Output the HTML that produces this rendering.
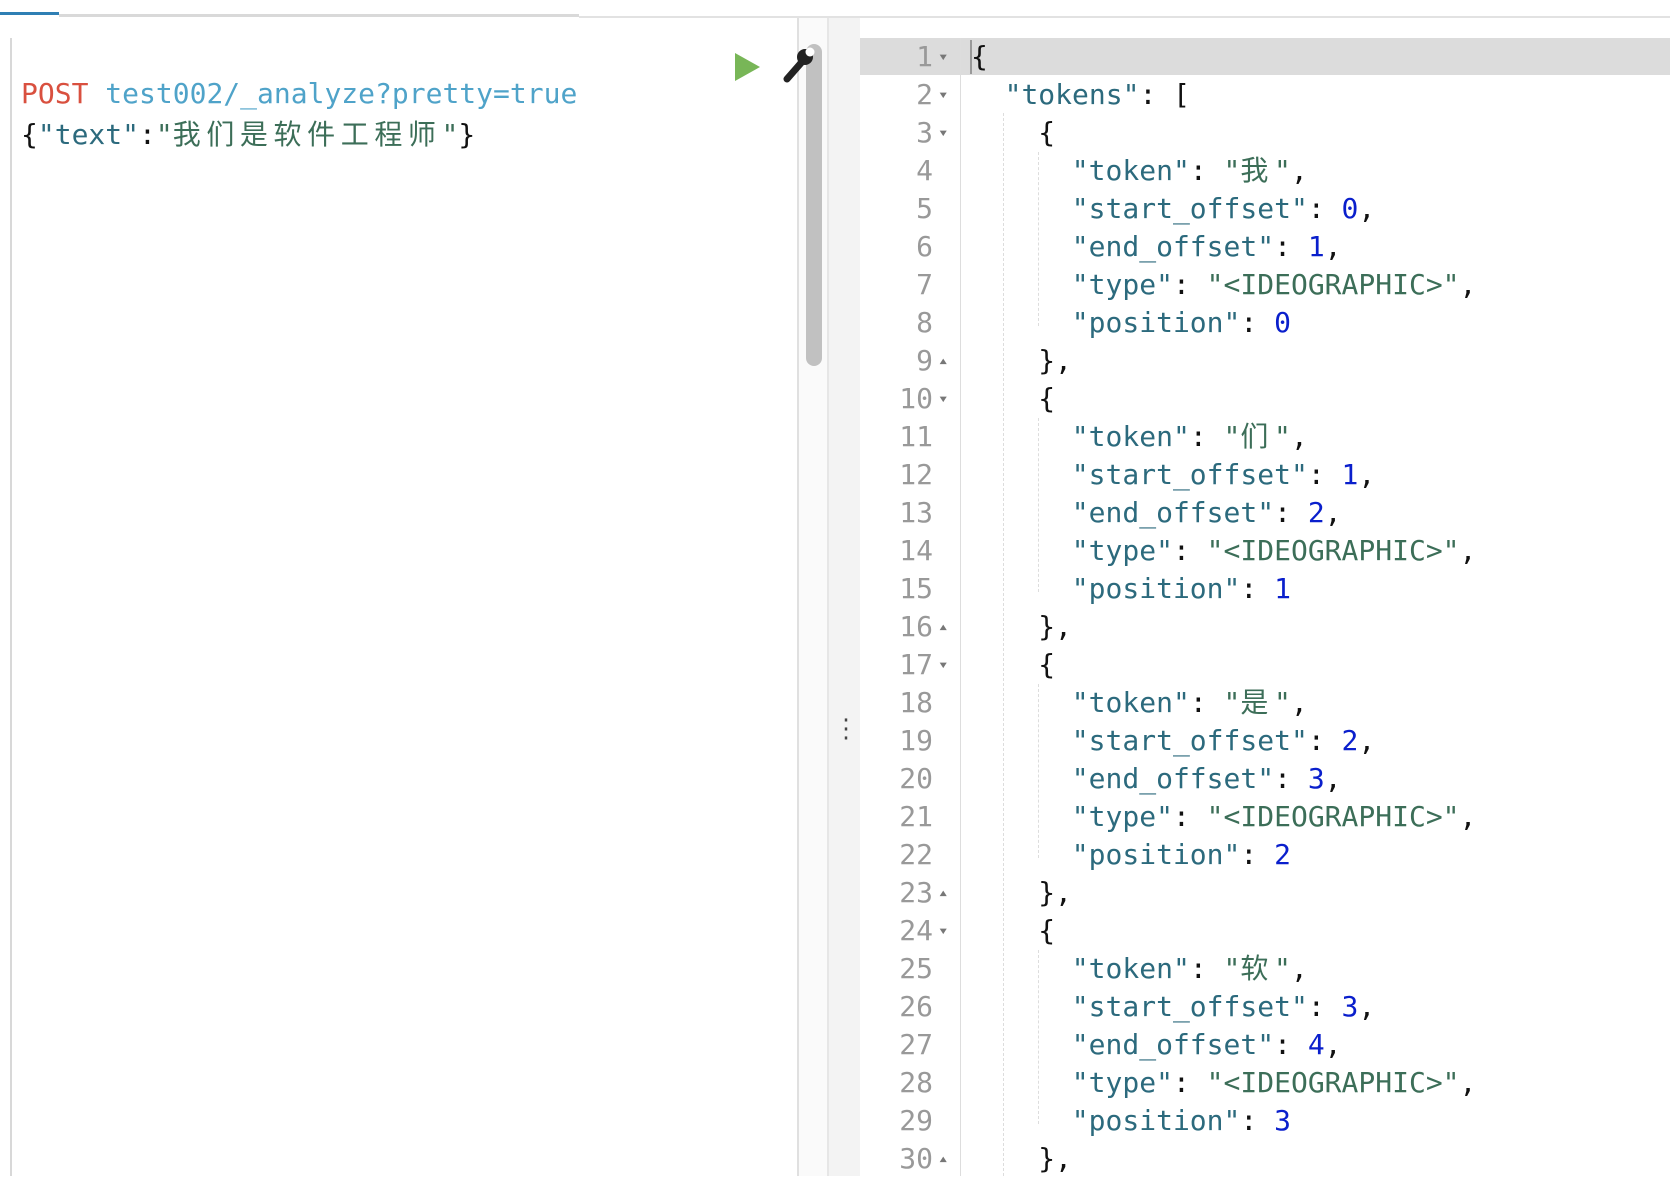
<!DOCTYPE html>
<html><head><meta charset="utf-8"><style>
*{margin:0;padding:0;box-sizing:border-box}
body{width:1670px;height:1176px;background:#fff;position:relative;overflow:hidden;font-family:"DejaVu Sans Mono","Liberation Mono","Noto Sans CJK SC",monospace;font-size:28px}
.abs{position:absolute}
.ln{position:absolute;height:38px;line-height:38px;white-space:pre}
.num{position:absolute;left:860px;width:73px;text-align:right;color:#999;height:38px;line-height:38px}
.fold{position:absolute;left:939px;color:#777;font-size:14px;height:38px;line-height:38px;transform:scaleX(1.3)}
.k{color:#2c6a7d}.s{color:#3c6e58}.n{color:#0a1fcc}.p{color:#111}
.c{letter-spacing:5.6px}
</style></head><body>
<div class="abs" style="left:0;top:12px;width:59px;height:3px;background:#2f7fb4"></div>
<div class="abs" style="left:59px;top:14px;width:520px;height:3px;background:#d9d9d9"></div>
<div class="abs" style="left:579px;top:16px;width:1091px;height:2px;background:#e2e2e2"></div>
<div class="abs" style="left:10px;top:38px;width:2px;height:1138px;background:#d8d8d8"></div>
<div class="abs" style="left:797px;top:18px;width:2px;height:1158px;background:#e0e0e0"></div>
<div class="abs" style="left:799px;top:18px;width:28px;height:1158px;background:#fafafa"></div>
<div class="abs" style="left:827px;top:18px;width:2px;height:1158px;background:#e6e6e6"></div>
<div class="abs" style="left:829px;top:18px;width:31px;height:1158px;background:#f3f3f3"></div>
<div class="abs" style="left:806px;top:44px;width:16px;height:322px;background:#c1c1c1;border-radius:8px"></div>
<svg class="abs" style="left:733px;top:52px" width="28" height="30"><polygon points="2,1 27,15 2,29" fill="#78b657"/></svg>
<svg class="abs" style="left:783px;top:44px" width="34" height="40" viewBox="0 0 34 40"><path d="M4 35 L18 19" stroke="#222" stroke-width="7" stroke-linecap="round"/><circle cx="22" cy="13" r="8" fill="#222"/><circle cx="27" cy="8" r="4.5" fill="#fff"/></svg>
<div class="abs" style="left:840px;top:716px;color:#444;font-size:20px;line-height:9px;width:6px">·<br>·<br>·</div>
<div class="ln" style="left:21px;top:75px"><span style="color:#d9503f">POST</span> <span style="color:#4fa3c9">test002/_analyze?pretty=true</span></div>
<div class="ln" style="left:21px;top:116px"><span class="p">{</span><span class="k">"text"</span><span class="p">:</span><span class="s">"<span class="c">我们是软件工程师</span>"</span><span class="p">}</span></div>
<div class="abs" style="left:860px;top:38px;width:810px;height:37px;background:#dcdcdc"></div>
<div class="abs" style="left:960px;top:38px;width:1px;height:1138px;background:#ddd"></div>
<div class="abs" style="left:970px;top:40px;width:2px;height:34px;background:#999"></div>
<div class="abs" style="left:1003px;top:113px;height:1063px;border-left:1px dashed #ddd"></div>
<div class="abs" style="left:1038px;top:152px;height:174px;border-left:1px dashed #ddd"></div>
<div class="abs" style="left:1038px;top:418px;height:174px;border-left:1px dashed #ddd"></div>
<div class="abs" style="left:1038px;top:684px;height:174px;border-left:1px dashed #ddd"></div>
<div class="abs" style="left:1038px;top:950px;height:174px;border-left:1px dashed #ddd"></div>
<div id="r"></div>
<script>
var L=[[0,'<span class="p">{</span>','d'],[1,'<span class="k">"tokens"</span><span class="p">: [</span>','d']];
var toks=['我','们','是','软'];
for(var i=0;i<4;i++){L.push([2,'<span class="p">{</span>','d']);
L.push([3,'<span class="k">"token"</span><span class="p">: </span><span class="s">"<span class="c">'+toks[i]+'</span>"</span><span class="p">,</span>']);
L.push([3,'<span class="k">"start_offset"</span><span class="p">: </span><span class="n">'+i+'</span><span class="p">,</span>']);
L.push([3,'<span class="k">"end_offset"</span><span class="p">: </span><span class="n">'+(i+1)+'</span><span class="p">,</span>']);
L.push([3,'<span class="k">"type"</span><span class="p">: </span><span class="s">"&lt;IDEOGRAPHIC&gt;"</span><span class="p">,</span>']);
L.push([3,'<span class="k">"position"</span><span class="p">: </span><span class="n">'+i+'</span>']);
L.push([2,'<span class="p">},</span>','u']);}
var h='';
for(var j=0;j<L.length;j++){var t=38+38*j;
h+='<div class="num" style="top:'+t+'px">'+(j+1)+'</div>';
if(L[j][2])h+='<div class="fold" style="top:'+t+'px">'+(L[j][2]=='d'?'▾':'▴')+'</div>';
h+='<div class="ln" style="left:'+(971+L[j][0]*33.6)+'px;top:'+t+'px">'+L[j][1]+'</div>';}
document.getElementById('r').innerHTML=h;
</script>
</body></html>
